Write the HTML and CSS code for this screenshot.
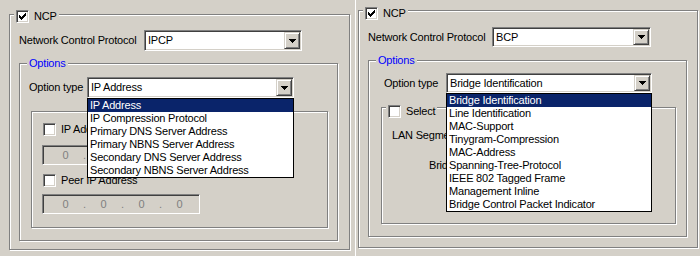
FILE: index.html
```html
<!DOCTYPE html>
<html lang="en">
<head>
  <meta charset="UTF-8" />
  <meta name="viewport" content="width=device-width, initial-scale=1.0"/>
  <title>PPP NCP Options</title>
  <link rel="stylesheet" href="styles.css">
</head>
<body>
  <div class="screen">

    <!-- IPCP dialog -->
    <div class="shot shot-ipcp">
      <div class="group ncp">
        <div class="legend">
          <span class="check"><svg width="7" height="7" viewBox="0 0 7 7"><path d="M6 0h1v1H6zM5 1h2v1H5zM0 2h1v1H0zM4 2h3v1H4zM0 3h2v1H0zM3 3h3v1H3zM0 4h5v1H0zM1 5h3v1H1zM2 6h1v1H2z"/></svg></span>
          <span>NCP</span>
        </div>
        <div class="row proto-row">
          <span class="label">Network Control Protocol</span>
          <div class="combo">
            <span class="combo-value">IPCP</span>
            <span class="combo-btn"><svg width="7" height="4" viewBox="0 0 7 4"><path d="M0 0h7v1H0zM1 1h5v1H1zM2 2h3v1H2zM3 3h1v1H3z"/></svg></span>
          </div>
        </div>
        <div class="group options">
          <div class="legend legend-blue">Options</div>
          <div class="row type-row">
            <span class="label">Option type</span>
            <div class="combo">
              <span class="combo-value">IP Address</span>
              <span class="combo-btn"><svg width="7" height="4" viewBox="0 0 7 4"><path d="M0 0h7v1H0zM1 1h5v1H1zM2 2h3v1H2zM3 3h1v1H3z"/></svg></span>
              <ul class="list">
                <li class="selected">IP Address</li>
                <li>IP Compression Protocol</li>
                <li>Primary DNS Server Address</li>
                <li>Primary NBNS Server Address</li>
                <li>Secondary DNS Server Address</li>
                <li>Secondary NBNS Server Address</li>
              </ul>
            </div>
          </div>
          <div class="group inner">
            <div class="check-row first">
              <span class="check"></span>
              <span>IP Address</span>
            </div>
            <div class="ip-field first">
              <span class="octet">0</span><span class="dot">.</span><span class="octet">0</span><span class="dot">.</span><span class="octet">0</span><span class="dot">.</span><span class="octet">0</span>
            </div>
            <div class="check-row second">
              <span class="check"></span>
              <span>Peer IP Address</span>
            </div>
            <div class="ip-field second">
              <span class="octet">0</span><span class="dot">.</span><span class="octet">0</span><span class="dot">.</span><span class="octet">0</span><span class="dot">.</span><span class="octet">0</span>
            </div>
          </div>
        </div>
      </div>
    </div>

    <!-- BCP dialog -->
    <div class="shot shot-bcp">
      <div class="group ncp">
        <div class="legend">
          <span class="check"><svg width="7" height="7" viewBox="0 0 7 7"><path d="M6 0h1v1H6zM5 1h2v1H5zM0 2h1v1H0zM4 2h3v1H4zM0 3h2v1H0zM3 3h3v1H3zM0 4h5v1H0zM1 5h3v1H1zM2 6h1v1H2z"/></svg></span>
          <span>NCP</span>
        </div>
        <div class="row proto-row">
          <span class="label">Network Control Protocol</span>
          <div class="combo">
            <span class="combo-value">BCP</span>
            <span class="combo-btn"><svg width="7" height="4" viewBox="0 0 7 4"><path d="M0 0h7v1H0zM1 1h5v1H1zM2 2h3v1H2zM3 3h1v1H3z"/></svg></span>
          </div>
        </div>
        <div class="group options">
          <div class="legend legend-blue">Options</div>
          <div class="row type-row">
            <span class="label">Option type</span>
            <div class="combo">
              <span class="combo-value">Bridge Identification</span>
              <span class="combo-btn"><svg width="7" height="4" viewBox="0 0 7 4"><path d="M0 0h7v1H0zM1 1h5v1H1zM2 2h3v1H2zM3 3h1v1H3z"/></svg></span>
              <ul class="list">
                <li class="selected">Bridge Identification</li>
                <li>Line Identification</li>
                <li>MAC-Support</li>
                <li>Tinygram-Compression</li>
                <li>MAC-Address</li>
                <li>Spanning-Tree-Protocol</li>
                <li>IEEE 802 Tagged Frame</li>
                <li>Management Inline</li>
                <li>Bridge Control Packet Indicator</li>
              </ul>
            </div>
          </div>
          <div class="group inner">
            <div class="legend">
              <span class="check"></span>
              <span>Select</span>
            </div>
            <div class="field-label lan">LAN Segment Number</div>
            <div class="field-label bridge">Bridge Number</div>
          </div>
        </div>
      </div>
    </div>

  </div>
</body>
</html>
```

FILE: styles.css
```css
* {
  box-sizing: border-box;
}
body {
  margin: 0;
  background-color: #d4d0c8;
  font-family: "Liberation Sans", Arial, sans-serif;
  font-size: 11px;
  line-height: 13px;
  letter-spacing: -0.2px;
  color: #000;
}
.screen {
  display: flex;
  width: 700px;
  height: 256px;
  overflow: hidden;
}
.shot {
  height: 256px;
  flex: none;
}
.shot-ipcp {
  width: 356px;
  border-right: 1px solid #fff;
}
.shot-bcp {
  width: 344px;
}

/* etched group box */
.group {
  border: 1px solid #808080;
  box-shadow: inset 1px 1px 0 #fff, 1px 1px 0 #fff;
}
.legend {
  display: flex;
  align-items: center;
  gap: 5px;
  width: max-content;
  height: 13px;
  padding: 0 2px;
  background-color: #d4d0c8;
  white-space: nowrap;
}
.legend-blue {
  color: #0000ff;
}

/* checkbox */
.check {
  flex: none;
  display: flex;
  align-items: center;
  justify-content: center;
  width: 13px;
  height: 13px;
  background: #fff;
  border: 1px solid;
  border-color: #808080 #fff #fff #808080;
  box-shadow: inset 1px 1px 0 #404040, inset -1px -1px 0 #d4d0c8;
}
.check-row {
  display: flex;
  align-items: center;
  gap: 5px;
  height: 13px;
  white-space: nowrap;
}

/* rows and combos */
.row {
  display: flex;
  align-items: center;
  white-space: nowrap;
}
.label {
  flex: none;
}
.combo {
  position: relative;
  flex: none;
  display: flex;
  padding: 1px;
  background: #fff;
  border: 1px solid;
  border-color: #808080 #fff #fff #808080;
  box-shadow: inset 1px 1px 0 #404040, inset -1px -1px 0 #d4d0c8;
}
.combo-value {
  flex: 1;
  display: flex;
  align-items: center;
  padding-left: 2px;
  overflow: hidden;
}
.combo-btn {
  flex: none;
  display: flex;
  align-items: center;
  justify-content: center;
  width: 16px;
  background: #d4d0c8;
  border: 1px solid;
  border-color: #d4d0c8 #404040 #404040 #d4d0c8;
  box-shadow: inset 1px 1px 0 #fff, inset -1px -1px 0 #808080;
}
.list {
  position: absolute;
  z-index: 5;
  top: calc(100% + 1px);
  left: -1px;
  right: -1px;
  margin: 0;
  padding: 0;
  list-style: none;
  background: #fff;
  border: 1px solid #000;
}
.list li {
  height: 13px;
  padding-left: 2px;
  white-space: nowrap;
}
.list li.selected {
  background: #0a246a;
  color: #fff;
}

/* disabled ip address field */
.ip-field {
  display: flex;
  align-items: center;
  width: 158px;
  height: 20px;
  padding-left: 8px;
  color: #808080;
  border: 1px solid;
  border-color: #808080 #fff #fff #808080;
  box-shadow: inset 1px 1px 0 #404040, inset -1px -1px 0 #d4d0c8;
}
.octet {
  width: 29px;
  text-align: center;
}
.dot {
  width: 9px;
  text-align: center;
}

/* IPCP dialog */
.shot-ipcp .ncp {
  margin: 14px 0 0 9px;
  width: 341px;
  height: 236px;
}
.shot-ipcp .ncp > .legend {
  margin: -5px 0 0 4px;
}
.shot-ipcp .proto-row {
  margin: 7px 0 0 9px;
}
.shot-ipcp .proto-row .label {
  width: 125px;
}
.shot-ipcp .proto-row .combo {
  width: 158px;
  height: 21px;
}
.shot-ipcp .options {
  margin: 12px 0 0 9px;
  width: 319px;
  height: 178px;
}
.options > .legend {
  margin: -7px 0 0 7px;
}
.shot-ipcp .type-row {
  margin: 7px 0 0 9px;
}
.shot-ipcp .type-row .label {
  width: 58px;
}
.shot-ipcp .type-row .combo {
  width: 207px;
  height: 21px;
}
.shot-ipcp .inner {
  margin: 13px 0 0 11px;
  width: 297px;
  height: 117px;
}
.shot-ipcp .check-row.first {
  margin: 11px 0 0 11px;
}
.shot-ipcp .ip-field.first {
  margin: 9px 0 0 10px;
}
.shot-ipcp .check-row.second {
  margin: 9px 0 0 11px;
}
.shot-ipcp .ip-field.second {
  margin: 7px 0 0 10px;
}

/* BCP dialog */
.shot-bcp .ncp {
  margin: 10px 0 0 2px;
  width: 340px;
  height: 238px;
}
.shot-bcp .ncp > .legend {
  margin: -4px 0 0 4px;
}
.shot-bcp .proto-row {
  margin: 7px 0 0 9px;
}
.shot-bcp .proto-row .label {
  width: 124px;
}
.shot-bcp .proto-row .combo {
  width: 159px;
  height: 20px;
}
.shot-bcp .options {
  margin: 13px 0 0 9px;
  width: 319px;
  height: 177px;
}
.shot-bcp .type-row {
  margin: 6px 0 0 15px;
}
.shot-bcp .type-row .label {
  width: 62px;
}
.shot-bcp .type-row .combo {
  width: 206px;
  height: 20px;
}
.shot-bcp .inner {
  margin: 14px 0 0 12px;
  width: 295px;
  height: 117px;
}
.shot-bcp .inner > .legend {
  margin: -3px 0 0 4px;
}
.field-label {
  height: 13px;
  white-space: nowrap;
}
.field-label.lan {
  margin: 11px 0 0 10px;
}
.field-label.bridge {
  margin: 17px 0 0 47px;
}
```
